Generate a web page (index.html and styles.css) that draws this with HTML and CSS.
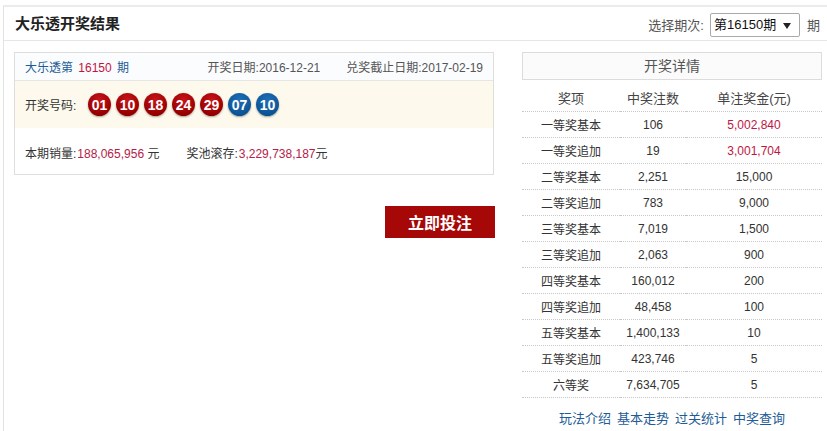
FILE: index.html
```html
<!DOCTYPE html>
<html lang="zh-CN">
<head>
    <meta charset="UTF-8">
    <title>大乐透开奖结果</title>
    <link rel="stylesheet" href="styles.css">
</head>
<body>
    <div class="wrap">
        <div class="head">
            <h2>大乐透开奖结果</h2>
            <div class="pick">
                <span>选择期次:</span>
                <span class="sel">
                    <select id="issue">
                        <option>第16150期</option>
                        <option>第16149期</option>
                        <option>第16148期</option>
                    </select>
                </span>
                <span>期</span>
            </div>
        </div>

        <div class="main">
            <div class="left">
                <div class="info">
                    <div class="info-top">
                        <div class="issue">大乐透第 <em>16150</em> 期</div>
                        <div class="dates">
                            <span>开奖日期:2016-12-21</span>
                            <span>兑奖截止日期:2017-02-19</span>
                        </div>
                    </div>
                    <div class="balls">
                        <span class="label">开奖号码:</span>
                        <span class="ball red">01</span>
                        <span class="ball red">10</span>
                        <span class="ball red">18</span>
                        <span class="ball red">24</span>
                        <span class="ball red">29</span>
                        <span class="ball blue">07</span>
                        <span class="ball blue">10</span>
                    </div>
                    <div class="sales">
                        <span>本期销量:<em>188,065,956</em> 元</span>
                        <span>奖池滚存:<em>3,229,738,187</em>元</span>
                    </div>
                </div>
                <div class="bet-row">
                    <a href="#" class="bet">立即投注</a>
                </div>
            </div>

            <div class="right">
                <div class="detail-title">开奖详情</div>
                <table class="prize">
                    <thead>
                        <tr><th>奖项</th><th>中奖注数</th><th>单注奖金(元)</th></tr>
                    </thead>
                    <tbody id="prizeRows"></tbody>
                </table>
                <div class="links">
                    <a href="#">玩法介绍</a>
                    <a href="#">基本走势</a>
                    <a href="#">过关统计</a>
                    <a href="#">中奖查询</a>
                </div>
            </div>
        </div>
    </div>

    <script>
        const prizes = [
            ['一等奖基本', '106', '5,002,840', true],
            ['一等奖追加', '19', '3,001,704', true],
            ['二等奖基本', '2,251', '15,000'],
            ['二等奖追加', '783', '9,000'],
            ['三等奖基本', '7,019', '1,500'],
            ['三等奖追加', '2,063', '900'],
            ['四等奖基本', '160,012', '200'],
            ['四等奖追加', '48,458', '100'],
            ['五等奖基本', '1,400,133', '10'],
            ['五等奖追加', '423,746', '5'],
            ['六等奖', '7,634,705', '5']
        ];

        document.getElementById('prizeRows').innerHTML = prizes.map(p => `
            <tr>
                <td>${p[0]}</td>
                <td class="num">${p[1]}</td>
                <td class="num${p[3] ? ' hot' : ''}">${p[2]}</td>
            </tr>
        `).join('');
    </script>
</body>
</html>
```

FILE: styles.css
```css
body {
    margin: 0;
    font-family: "Liberation Sans", "Noto Sans CJK SC", sans-serif;
    font-size: 12px;
    color: #333;
    background: #fff;
}

em {
    font-style: normal;
}

a {
    text-decoration: none;
}

.wrap {
    margin: 5px 0 0 3px;
    border-top: 2px solid #ebebeb;
    border-left: 1px solid #e3e3e3;
    height: 430px;
}

.head {
    height: 33px;
    border-bottom: 1px solid #e6e6e6;
    display: flex;
    justify-content: space-between;
    align-items: center;
    padding: 0 7px 0 11px;
}

.head h2 {
    margin: 0;
    font-size: 15px;
    font-weight: bold;
    color: #222;
    line-height: 20px;
    padding-top: 1px;
}

.pick {
    display: flex;
    align-items: center;
    font-size: 13px;
    color: #555;
    padding-top: 2px;
}

.sel {
    position: relative;
    margin: 0 7px 0 6px;
}

.sel select {
    appearance: none;
    -webkit-appearance: none;
    width: 90px;
    height: 24px;
    border: 1px solid #a9a9a9;
    border-radius: 2px;
    background: #fff;
    font-family: "Liberation Sans", "Noto Sans CJK SC", sans-serif;
    font-size: 13px;
    color: #111;
    padding: 0 0 0 3px;
}

.sel::after {
    content: "";
    position: absolute;
    right: 9px;
    top: 10px;
    border-left: 4px solid transparent;
    border-right: 4px solid transparent;
    border-top: 6px solid #222;
    pointer-events: none;
}

.main {
    display: flex;
    padding: 11px 0 0 10px;
}

.left {
    width: 480px;
}

.info {
    border: 1px solid #dedede;
}

.info-top {
    height: 27px;
    display: flex;
    justify-content: space-between;
    align-items: center;
    padding: 0 10px;
    background: #fbfcfe;
    border-bottom: 1px solid #e6e6e6;
}

.issue {
    color: #1d5c97;
}

.issue em {
    color: #c0153f;
    margin: 0 2px;
}

.dates {
    display: flex;
    gap: 26px;
    color: #555;
}

.balls {
    height: 47px;
    background: #fdf9ec;
    display: flex;
    align-items: center;
    padding: 0 10px;
}

.balls .label {
    width: 63px;
    color: #333;
}

.ball {
    width: 23px;
    height: 23px;
    border-radius: 50%;
    margin-right: 5px;
    display: flex;
    align-items: center;
    justify-content: center;
    color: #fff;
    font-weight: bold;
    font-size: 14px;
    box-shadow: 0 1px 2px rgba(0,0,0,0.35);
}

.ball.red {
    background: radial-gradient(circle at 50% 30%, #c8141b, #980000 70%, #7a0000);
}

.ball.blue {
    background: radial-gradient(circle at 50% 30%, #1f6db4, #0c5596 70%, #08457c);
}

.sales {
    height: 43px;
    display: flex;
    align-items: center;
    padding: 3px 10px 0;
    gap: 27px;
}

.sales em {
    color: #b52147;
    margin-left: 1px;
}

.bet-row {
    display: flex;
    justify-content: flex-end;
    margin-top: 31px;
}

.bet {
    width: 110px;
    height: 32px;
    background: #a60707;
    color: #fff;
    font-size: 16px;
    font-weight: bold;
    display: flex;
    align-items: center;
    justify-content: center;
    margin-right: -1px;
}

.right {
    width: 300px;
    margin-left: 28px;
}

.detail-title {
    height: 26px;
    border: 1px solid #dcdcdc;
    background: #fbfbfb;
    text-align: center;
    font-size: 14px;
    line-height: 26px;
    color: #555;
}

.prize {
    width: 100%;
    border-collapse: collapse;
    margin-top: 4px;
    table-layout: fixed;
}

.prize th,
.prize td {
    height: 25px;
    padding: 0;
    text-align: center;
    border-bottom: 1px dotted #c8c8c8;
    font-weight: normal;
}

.prize th {
    height: 27px;
    color: #444;
    font-size: 13px;
}

.prize th:nth-child(1) { width: 98px; }
.prize th:nth-child(2) { width: 66px; }

.prize td {
    color: #333;
}

.prize td.hot {
    color: #c0153f;
}

.links {
    display: flex;
    justify-content: center;
    gap: 6px;
    margin-top: 10px;
}

.links a {
    color: #1d5c97;
    font-size: 13px;
}
```
